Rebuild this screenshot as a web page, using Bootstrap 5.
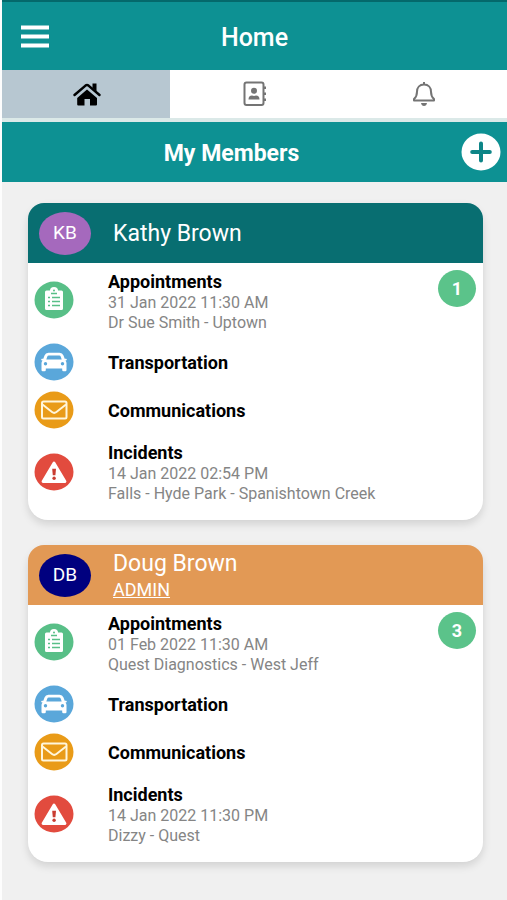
<!DOCTYPE html>
<html lang="en">
<head>
<meta charset="utf-8">
<meta name="viewport" content="width=device-width, initial-scale=1">
<title>Home - My Members</title>
<link href="https://cdn.jsdelivr.net/npm/bootstrap@5.3.0/dist/css/bootstrap.min.css" rel="stylesheet">
<style>
  body { font-family: Roboto, "Liberation Sans", sans-serif; background: #f0f0f0; border-left: 2px solid #fdfdfd; min-height: 100vh; }
  .app-bar { background: #0d9193; border-top: 2px solid #04696b; height: 70px; }
  .side-slot { width: 72px; }
  .app-title { font-size: 25px; line-height: 32px; font-weight: 500; padding-top: 4px; }
  .tab-strip { border-bottom: 4px solid #dbe9e8; background: #fff; }
  .tab-link { height: 48px; color: #747474; padding-left: 2px; }
  .tab-link.active { background: #b7c7d1; color: #000; }
  .section-bar { background: #0d9193; height: 60px; }
  .section-title { font-size: 23px; line-height: 32px; font-weight: 700; padding-top: 3px; }
  .add-slot { width: 46px; }
  .members { padding: 21px 24px 38px 26px; gap: 25px; }
  .member { border-radius: 20px; box-shadow: 0 4px 8px rgba(0,0,0,.13); }
  .member-head { height: 60px; padding-left: 11px; gap: 22px; border-radius: 16px 16px 0 0; }
  .head-teal { background: #086e71; }
  .head-orange { background: #e29955; }
  .initials { width: 52px; height: 43px; border-radius: 50%; font-size: 19px; padding-top: 1px; }
  .bg-kb { background: #a569bd; }
  .bg-db { background: #00007f; }
  .member-name { font-size: 23px; line-height: 28px; font-weight: 400; padding-top: 2px; }
  .member-role { font-size: 18px; line-height: 24px; }
  .member-body { padding-bottom: 9px; }
  .entry { min-height: 48px; padding: 0 7px 0 6px; gap: 34px; }
  .entry-tall { min-height: 76px; }
  .entry-icon { width: 40px; height: 38px; margin-bottom: 2px; }
  .entry-title { font-size: 18px; line-height: 22px; font-weight: 700; color: #000; }
  .entry-line { font-size: 16px; line-height: 20px; color: #858585; }
  .entry-first { padding-top: 2px; }
  .count { width: 38px; height: 37px; border-radius: 50%; background: #5bc38a; font-size: 18px; margin-top: 7px; }
</style>
<script src="https://cdn.jsdelivr.net/npm/bootstrap@5.3.0/dist/js/bootstrap.bundle.min.js"></script>
</head>
<body>
<svg class="d-none" aria-hidden="true">
  <symbol id="i-clip" viewBox="0 0 40 38">
    <ellipse cx="20" cy="19" rx="19.500" ry="18.500" fill="#58bf87"/>
    <path d="M12.500 9.500H16a4 3.500 0 0 1 8 0h3.500q1.500 0 1.500 1.500v16.500q0 1.500-1.500 1.500h-15q-1.500 0-1.500-1.500V11q0-1.500 1.500-1.500z" fill="#fff"/>
    <circle cx="20" cy="9.500" r="1" fill="#58bf87"/>
    <path d="M17 12.500h6M14 16.500h2M18 16.500h8M14 20.500h2M18 20.500h8M14 24.500h2M18 24.500h8" stroke="#58bf87" stroke-width="1.300"/>
  </symbol>
  <symbol id="i-car" viewBox="0 0 40 38">
    <ellipse cx="20" cy="19" rx="19.500" ry="18.500" fill="#5aa7da"/>
    <path d="M14.500 9.800h11q3 0 4 2.700l1.200 3.200h1.300q.8 0 .8.900t-.9.900h-.5q1.100 1 1.100 2.600v7q0 1.200-1.200 1.200h-1.800q-1.300 0-1.300-1.200v-1.700H11.800v1.700q0 1.200-1.300 1.200H8.700q-1.200 0-1.200-1.200v-7q0-1.600 1.100-2.600h-.5q-.9 0-.9-.9t.8-.9h1.300l1.200-3.200q1-2.700 4-2.700z" fill="#fff"/>
    <path d="M14.800 12.600h10.400q1.200 0 1.600 1.100l.9 2.700H12.300l.9-2.700q.4-1.100 1.600-1.100z" fill="#5aa7da"/>
    <circle cx="11.500" cy="20.800" r="1.700" fill="#5aa7da"/><circle cx="28.500" cy="20.800" r="1.700" fill="#5aa7da"/>
  </symbol>
  <symbol id="i-mail" viewBox="0 0 40 38">
    <ellipse cx="20" cy="19" rx="19.500" ry="18.500" fill="#e99b18"/>
    <rect x="8" y="10.500" width="24.500" height="17" rx="1.500" fill="none" stroke="#fff6dc" stroke-width="2"/>
    <path d="M8.500 13.500l9.500 7.500q2.200 1.700 4.400 0l9.600-7.500" fill="none" stroke="#fff6dc" stroke-width="2"/>
  </symbol>
  <symbol id="i-warn" viewBox="0 0 40 38">
    <ellipse cx="20" cy="19" rx="19.500" ry="18.500" fill="#e24b3e"/>
    <path d="M20 10L31 28.500H9z" fill="#fff" stroke="#fff" stroke-width="2.800" stroke-linejoin="round"/>
    <path d="M18.200 15.800h3.800l-.6 6.500h-2.600z" fill="#c93c31"/><circle cx="20.100" cy="25.300" r="1.700" fill="#c93c31"/>
  </symbol>
</svg>

<header class="app-bar d-flex align-items-center text-white">
  <div class="side-slot">
    <button type="button" class="btn border-0 p-0 ms-3 d-flex text-white" aria-label="Menu">
      <svg width="34" height="26" viewBox="0 0 34 26"><path d="M3 4.500h28M3 13.500h28M3 22.500h28" stroke="#fff" stroke-width="4.200"/></svg>
    </button>
  </div>
  <h1 class="app-title flex-grow-1 text-center mb-0">Home</h1>
  <div class="side-slot"></div>
</header>

<nav class="tab-strip d-flex" aria-label="Sections">
  <a class="tab-link active d-flex flex-fill w-100 align-items-center justify-content-center" href="#home" aria-label="Home" aria-current="page">
    <svg width="30" height="26" viewBox="0 0 30 26"><path d="M2.500 14L13.500 4.600q1.500-1.200 3 0L27.500 14" fill="none" stroke="#000" stroke-width="2.500" stroke-linecap="round" stroke-linejoin="round"/><path d="M20.500 2.500h4v8l-4-3.500zM15 8.500l10 8.500v6.500q0 1-1 1h-6v-6.500h-5.500v6.500H6.200q-1 0-1-1V17z" fill="#000"/></svg>
  </a>
  <a class="tab-link d-flex flex-fill w-100 align-items-center justify-content-center" href="#contacts" aria-label="Contacts">
    <svg width="24" height="26" viewBox="0 0 24 26" fill="none" stroke="currentColor" stroke-width="2"><rect x="1.500" y="1.500" width="19" height="22.500" rx="2"/><path d="M21.500 5.500v2.500M21.500 11.500v2.500M21.500 17.500v2.500" stroke-width="3"/><circle cx="11" cy="9.800" r="3" fill="currentColor" stroke="none"/><path d="M5.500 18.500q0-4 3.500-4 2 .8 4 0 3.500 0 3.500 4z" fill="currentColor" stroke="none"/></svg>
  </a>
  <a class="tab-link d-flex flex-fill w-100 align-items-center justify-content-center" href="#alerts" aria-label="Alerts">
    <svg width="24" height="26" viewBox="0 0 24 26" fill="none" stroke="currentColor" stroke-width="2" stroke-linejoin="round"><path d="M12 1v2.500M12 3.500c-4.500 0-7 3.200-7 7.200 0 4.500-1.500 6-3 7.300v1.500h20V18c-1.500-1.300-3-2.800-3-7.300 0-4-2.500-7.200-7-7.200z"/><path d="M9 22h6q-.5 3-3 3t-3-3z" fill="currentColor" stroke="none"/></svg>
  </a>
</nav>

<div class="section-bar d-flex align-items-center text-white">
  <h2 class="section-title flex-grow-1 text-center mb-0">My Members</h2>
  <div class="add-slot">
    <button type="button" class="btn border-0 p-0 d-flex" aria-label="Add member">
      <svg width="40" height="38" viewBox="0 0 40 38"><ellipse cx="20" cy="19" rx="19.500" ry="18.500" fill="#fff"/><path d="M20 10.500v17M11.200 19h17.600" stroke="#0d8587" stroke-width="4" stroke-linecap="round"/></svg>
    </button>
  </div>
</div>

<main class="members d-flex flex-column">
  <section class="member card border-0">
    <div class="member-head head-teal d-flex align-items-center text-white">
      <span class="initials bg-kb d-flex align-items-center justify-content-center">KB</span>
      <h3 class="member-name mb-0">Kathy Brown</h3>
    </div>
    <div class="member-body">
      <div class="entry entry-tall d-flex align-items-center">
        <svg class="entry-icon flex-shrink-0"><use href="#i-clip"/></svg>
        <div class="entry-first flex-grow-1"><div class="entry-title">Appointments</div><div class="entry-line">31 Jan 2022 11:30 AM</div><div class="entry-line">Dr Sue Smith - Uptown</div></div>
        <span class="count d-flex flex-shrink-0 align-items-center justify-content-center align-self-start fw-bold text-white">1</span>
      </div>
      <div class="entry d-flex align-items-center">
        <svg class="entry-icon flex-shrink-0"><use href="#i-car"/></svg><div class="entry-title">Transportation</div>
      </div>
      <div class="entry d-flex align-items-center">
        <svg class="entry-icon flex-shrink-0"><use href="#i-mail"/></svg><div class="entry-title">Communications</div>
      </div>
      <div class="entry entry-tall d-flex align-items-center">
        <svg class="entry-icon flex-shrink-0"><use href="#i-warn"/></svg>
        <div><div class="entry-title">Incidents</div><div class="entry-line">14 Jan 2022 02:54 PM</div><div class="entry-line">Falls - Hyde Park - Spanishtown Creek</div></div>
      </div>
    </div>
  </section>

  <section class="member card border-0">
    <div class="member-head head-orange d-flex align-items-center text-white">
      <span class="initials bg-db d-flex align-items-center justify-content-center">DB</span>
      <div><h3 class="member-name mb-0">Doug Brown</h3><a class="member-role d-block text-white" href="#admin">ADMIN</a></div>
    </div>
    <div class="member-body">
      <div class="entry entry-tall d-flex align-items-center">
        <svg class="entry-icon flex-shrink-0"><use href="#i-clip"/></svg>
        <div class="entry-first flex-grow-1"><div class="entry-title">Appointments</div><div class="entry-line">01 Feb 2022 11:30 AM</div><div class="entry-line">Quest Diagnostics - West Jeff</div></div>
        <span class="count d-flex flex-shrink-0 align-items-center justify-content-center align-self-start fw-bold text-white">3</span>
      </div>
      <div class="entry d-flex align-items-center">
        <svg class="entry-icon flex-shrink-0"><use href="#i-car"/></svg><div class="entry-title">Transportation</div>
      </div>
      <div class="entry d-flex align-items-center">
        <svg class="entry-icon flex-shrink-0"><use href="#i-mail"/></svg><div class="entry-title">Communications</div>
      </div>
      <div class="entry entry-tall d-flex align-items-center">
        <svg class="entry-icon flex-shrink-0"><use href="#i-warn"/></svg>
        <div><div class="entry-title">Incidents</div><div class="entry-line">14 Jan 2022 11:30 PM</div><div class="entry-line">Dizzy - Quest</div></div>
      </div>
    </div>
  </section>
</main>
</body>
</html>
